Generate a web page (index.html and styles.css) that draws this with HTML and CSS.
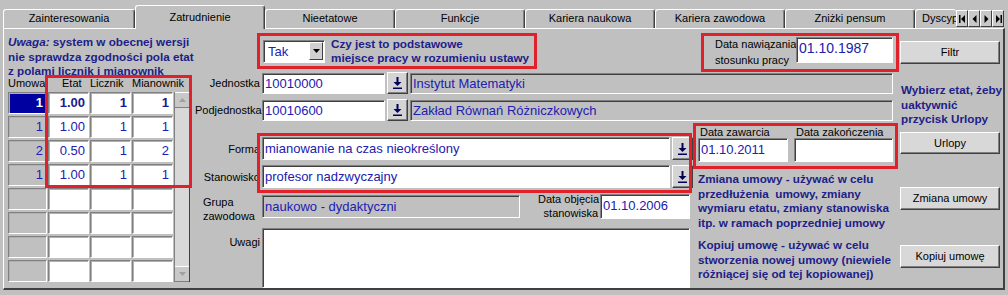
FILE: index.html
```html
<!DOCTYPE html>
<html lang="pl">
<head>
    <meta charset="UTF-8">
    <title>Zatrudnienie</title>
    <link rel="stylesheet" href="styles.css">
</head>
<body>
    <div class="tabs">
        <div class="tab first">Zainteresowania</div>
        <div class="tab active">Zatrudnienie</div>
        <div class="tab">Nieetatowe</div>
        <div class="tab">Funkcje</div>
        <div class="tab">Kariera naukowa</div>
        <div class="tab">Kariera zawodowa</div>
        <div class="tab">Zniżki pensum</div>
        <div class="tab cut">Dyscypliny</div>
        <div class="tab-nav">
            <span class="nav-btn"><svg width="7" height="8" viewBox="0 0 7 8"><rect x="0" y="0" width="1.5" height="8"/><path d="M6 0v8L2 4z"/></svg></span>
            <span class="nav-btn"><svg width="5" height="8" viewBox="0 0 5 8"><path d="M4.5 0v8L0.5 4z"/></svg></span>
            <span class="nav-btn"><svg width="5" height="8" viewBox="0 0 5 8"><path d="M0.5 0v8l4-4z"/></svg></span>
            <span class="nav-btn"><svg width="7" height="8" viewBox="0 0 7 8"><path d="M1 0v8l4-4z"/><rect x="5.5" y="0" width="1.5" height="8"/></svg></span>
        </div>
    </div>

    <div class="panel">
        <!-- lewa kolumna: uwaga + etaty -->
        <div class="left">
            <p class="note"><i>Uwaga:</i> system w obecnej wersji<br>nie sprawdza zgodności pola etat<br>z polami licznik i mianownik</p>
            <div class="etaty">
                <div class="etaty-head">
                    <span class="h-umowa">Umowa</span>
                    <span class="h-etat">Etat</span>
                    <span class="h-licznik">Licznik</span>
                    <span class="h-mian">Mianownik</span>
                </div>
                <div class="etaty-body">
                    <div class="etaty-grid">
                        <div class="cell key sel">1</div><div class="cell b">1.00</div><div class="cell b">1</div><div class="cell b">1</div>
                        <div class="cell key">1</div><div class="cell">1.00</div><div class="cell">1</div><div class="cell">1</div>
                        <div class="cell key">2</div><div class="cell">0.50</div><div class="cell">1</div><div class="cell">2</div>
                        <div class="cell key">1</div><div class="cell">1.00</div><div class="cell">1</div><div class="cell">1</div>
                        <div class="cell key"></div><div class="cell"></div><div class="cell"></div><div class="cell"></div>
                        <div class="cell key"></div><div class="cell"></div><div class="cell"></div><div class="cell"></div>
                        <div class="cell key"></div><div class="cell"></div><div class="cell"></div><div class="cell"></div>
                        <div class="cell key"></div><div class="cell"></div><div class="cell"></div><div class="cell"></div>
                    </div>
                    <div class="scroll">
                        <span class="scroll-btn"><svg width="7" height="4" viewBox="0 0 7 4"><path d="M0 4h7L3.5 0z" fill="#a0a0a0"/></svg></span>
                        <span class="scroll-track"></span>
                        <span class="scroll-btn"><svg width="7" height="4" viewBox="0 0 7 4"><path d="M0 0h7L3.5 4z" fill="#a0a0a0"/></svg></span>
                    </div>
                </div>
                <div class="mark mark-etaty"></div>
            </div>
        </div>

        <div class="main">
            <div class="content">
                <div class="row-top">
                    <div class="box box-podst">
                        <div class="combo">
                            <span class="combo-val">Tak</span>
                            <span class="combo-btn"><svg width="7" height="4" viewBox="0 0 7 4"><path d="M0 0h7L3.5 4z"/></svg></span>
                        </div>
                        <p class="hint">Czy jest to podstawowe<br>miejsce pracy w rozumieniu ustawy</p>
                    </div>
                    <div class="box box-nawiaz">
                        <span class="lbl-nawiaz">Data nawiązania<br>stosunku pracy</span>
                        <span class="input in-nawiaz">01.10.1987</span>
                    </div>
                </div>

                <div class="row row-jedn">
                    <span class="lbl">Jednostka</span>
                    <span class="input in-kod">10010000</span>
                    <span class="drop"><svg width="9" height="12" viewBox="0 0 9 12"><path d="M3.5 0h2v5h3l-4 4-4-4h3z"/><rect y="10.5" width="9" height="1.5"/></svg></span>
                    <span class="field in-nazwa">Instytut Matematyki</span>
                </div>
                <div class="row row-podj">
                    <span class="lbl">Podjednostka</span>
                    <span class="input in-kod">10010600</span>
                    <span class="drop"><svg width="9" height="12" viewBox="0 0 9 12"><path d="M3.5 0h2v5h3l-4 4-4-4h3z"/><rect y="10.5" width="9" height="1.5"/></svg></span>
                    <span class="field in-nazwa">Zakład Równań Różniczkowych</span>
                </div>

                <div class="lower">
                    <div class="form">
                        <div class="fs-group">
                            <div class="row">
                                <span class="lbl">Forma</span>
                                <span class="input in-long">mianowanie na czas nieokreślony</span>
                                <span class="drop"><svg width="9" height="12" viewBox="0 0 9 12"><path d="M3.5 0h2v5h3l-4 4-4-4h3z"/><rect y="10.5" width="9" height="1.5"/></svg></span>
                            </div>
                            <div class="row">
                                <span class="lbl">Stanowisko</span>
                                <span class="input in-long">profesor nadzwyczajny</span>
                                <span class="drop"><svg width="9" height="12" viewBox="0 0 9 12"><path d="M3.5 0h2v5h3l-4 4-4-4h3z"/><rect y="10.5" width="9" height="1.5"/></svg></span>
                            </div>
                            <div class="mark mark-fs"></div>
                        </div>
                        <div class="row row-grupa">
                            <span class="lbl lbl-grupa">Grupa<br>zawodowa</span>
                            <span class="field in-grupa">naukowo - dydaktyczni</span>
                            <span class="lbl-objecia">Data objęcia<br>stanowiska</span>
                            <span class="input in-objecia">01.10.2006</span>
                        </div>
                        <div class="row row-uwagi">
                            <span class="lbl lbl-uwagi">Uwagi</span>
                            <span class="input in-uwagi"></span>
                        </div>
                    </div>

                    <div class="notes">
                        <div class="box box-daty">
                            <div class="date-col">
                                <span class="date-lbl">Data zawarcia</span>
                                <span class="input in-data1">01.10.2011</span>
                            </div>
                            <div class="date-col col2">
                                <span class="date-lbl">Data zakończenia</span>
                                <span class="input in-data2"></span>
                            </div>
                        </div>
                        <p class="hint para1">Zmiana umowy - używać w celu<br>przedłużenia&nbsp; umowy, zmiany<br>wymiaru etatu, zmiany stanowiska<br>itp. w ramach poprzedniej umowy</p>
                        <p class="hint para2">Kopiuj umowę - używać w celu<br>stworzenia nowej umowy (niewiele<br>różniącej się od tej kopiowanej)</p>
                    </div>
                </div>
            </div>

            <div class="buttons">
                <span class="btn btn-filtr">Filtr</span>
                <p class="hint hint-urlopy">Wybierz etat, żeby<br>uaktywnić<br>przycisk Urlopy</p>
                <span class="btn btn-urlopy">Urlopy</span>
                <span class="btn btn-zmiana">Zmiana umowy</span>
                <span class="btn btn-kopiuj">Kopiuj umowę</span>
            </div>
        </div>
    </div>
</body>
</html>
```

FILE: styles.css
```css
* {
    margin: 0;
    padding: 0;
    box-sizing: border-box;
}

body {
    font-family: "Liberation Sans", Arial, sans-serif;
    font-size: 11px;
    color: #000;
    background: #c0c0c0;
    width: 1008px;
    height: 295px;
    overflow: hidden;
}

/* zakładki */
.tabs {
    display: flex;
    align-items: flex-end;
    height: 28px;
    padding-left: 3px;
}

.tab {
    width: 130px;
    height: 19px;
    line-height: 17px;
    text-align: center;
    white-space: nowrap;
    border-top: 1px solid #fff;
    border-left: 1px solid #fff;
    border-right: 1px solid #404040;
    border-radius: 3px 3px 0 0;
    box-shadow: inset -1px 0 #808080;
}

.tab.first {
    width: 132px;
}

.tab.active {
    height: 24px;
    margin-bottom: -1px;
    padding-top: 3px;
    position: relative;
    z-index: 1;
    background: #c0c0c0;
}

.tab.cut {
    width: 41px;
    text-align: left;
    padding-left: 6px;
    overflow: hidden;
    border-right: none;
    box-shadow: none;
}

.tab-nav {
    display: flex;
    margin-bottom: 1px;
}

.nav-btn {
    width: 12px;
    height: 17px;
    display: flex;
    align-items: center;
    justify-content: center;
    background: #c8c8c8;
    border-top: 1px solid #fff;
    border-left: 1px solid #fff;
    border-right: 1px solid #404040;
    border-bottom: 1px solid #404040;
}

.nav-btn svg {
    fill: #000;
}

/* panel */
.panel {
    display: flex;
    width: 1002px;
    height: 262px;
    margin-left: 3px;
    border-top: 1px solid #fff;
    border-left: 1px solid #fff;
    border-right: 2px solid #404040;
    border-bottom: 2px solid #404040;
}

.hint {
    font-size: 11.7px;
    font-weight: bold;
    line-height: 14.5px;
    color: #202088;
    white-space: nowrap;
}

.mark {
    position: absolute;
    border: 3px solid #e0202a;
    z-index: 2;
    pointer-events: none;
}

.box {
    border: 3px solid #e0202a;
}

/* lewa kolumna */
.left {
    width: 184px;
    margin-left: 4px;
    flex-shrink: 0;
}

.note {
    margin-top: 6px;
    width: 195px;
    height: 42px;
    overflow: hidden;
    font-size: 11.7px;
    font-weight: bold;
    line-height: 14.5px;
    color: #202088;
    white-space: nowrap;
}

.etaty {
    position: relative;
}

.etaty-head {
    display: flex;
    height: 15px;
    line-height: 13px;
    white-space: nowrap;
}

.h-umowa {
    width: 40px;
}

.h-etat {
    width: 42px;
    padding-left: 14px;
}

.h-licznik {
    width: 42px;
}

.etaty-body {
    display: flex;
}

.etaty-grid {
    display: grid;
    grid-template-columns: 39px 41px 41px 41px;
    grid-auto-rows: 22px;
    column-gap: 1px;
    row-gap: 2px;
}

.cell {
    background: #fff;
    border: 1px solid;
    border-color: #808080 #fff #fff #808080;
    box-shadow: inset 1px 1px 0 #b0b0b0;
    font-size: 13px;
    line-height: 20px;
    text-align: right;
    padding-right: 3px;
    color: #2020b0;
}

.cell.b {
    font-weight: bold;
    color: #1a1a90;
}

.cell.key {
    background: #c0c0c0;
}

.cell.key.sel {
    background: #0000a0;
    color: #fff;
    font-weight: bold;
}

.scroll {
    width: 16px;
    margin-left: 1px;
    display: flex;
    flex-direction: column;
    background: #d8d8d8;
    border-left: 1px solid #808080;
    border-right: 1px solid #404040;
}

.scroll-btn {
    height: 16px;
    display: flex;
    align-items: center;
    justify-content: center;
    background: #c8c8c8;
    border-top: 1px solid #fff;
    border-bottom: 1px solid #808080;
}

.scroll-track {
    flex: 1;
}

.mark-etaty {
    left: 37px;
    top: -2px;
    width: 147px;
    height: 113px;
}

/* środkowa część */
.main {
    display: flex;
    margin-left: 3px;
}

.content {
    width: 705px;
    display: flex;
    flex-direction: column;
}

.row-top {
    display: flex;
    align-items: flex-start;
    height: 39px;
    margin-top: 4px;
}

.box-podst {
    display: flex;
    align-items: center;
    width: 280px;
    height: 36px;
    margin-left: 62px;
    padding-left: 3px;
}

.combo {
    display: flex;
    align-items: center;
    width: 62px;
    height: 23px;
    background: #fff;
    border: 1px solid;
    border-color: #808080 #fff #fff #808080;
    box-shadow: inset 1px 1px 0 #404040;
}

.combo-val {
    flex: 1;
    padding-left: 4px;
    font-size: 13px;
    color: #2020b0;
}

.combo-btn {
    width: 14px;
    height: 18px;
    margin-right: 1px;
    display: flex;
    align-items: center;
    justify-content: center;
    background: #d0d0d0;
    border-top: 1px solid #fff;
    border-left: 1px solid #fff;
    border-right: 1px solid #404040;
    border-bottom: 1px solid #404040;
}

.box-podst .hint {
    margin-left: 6px;
}

.box-nawiaz {
    display: flex;
    align-items: flex-start;
    width: 198px;
    height: 39px;
    margin-left: 164px;
    padding-left: 11px;
}

.lbl-nawiaz {
    width: 81px;
    line-height: 16px;
    font-size: 11px;
    white-space: nowrap;
}

.input,
.field {
    display: block;
    height: 21px;
    font-size: 13px;
    line-height: 19px;
    padding-left: 2px;
    color: #2020b0;
    white-space: nowrap;
    overflow: hidden;
    border: 1px solid;
    border-color: #808080 #fff #fff #808080;
    box-shadow: inset 1px 1px 0 #404040;
}

.input {
    background: #fff;
}

.field {
    background: #c0c0c0;
}

.in-nawiaz {
    width: 97px;
    height: 26px;
    margin-top: 1px;
    font-size: 14px;
    line-height: 20px;
}

.row {
    display: flex;
    align-items: center;
}

.row-jedn {
    margin-top: 0;
}

.row-podj {
    margin-top: 5px;
}

.lbl {
    width: 65px;
    text-align: right;
    white-space: nowrap;
    margin-right: 2px;
}

.drop {
    width: 21px;
    height: 22px;
    margin-left: 2px;
    display: flex;
    align-items: center;
    justify-content: center;
    background: #d4d4d4;
    border-top: 1px solid #fff;
    border-left: 1px solid #fff;
    border-right: 1px solid #404040;
    border-bottom: 1px solid #404040;
    box-shadow: inset -1px -1px 0 #808080;
}

.drop svg {
    fill: #00005a;
}

.in-kod {
    width: 123px;
}

.in-nazwa {
    width: 483px;
    margin-left: 2px;
}

.lower {
    display: flex;
}

.form {
    width: 498px;
}

.fs-group {
    position: relative;
    margin-top: 16px;
    display: flex;
    flex-direction: column;
    gap: 5px;
}

.in-long {
    width: 408px;
    height: 23px;
    line-height: 21px;
}

.fs-group .drop {
    height: 23px;
}

.mark-fs {
    left: 62px;
    top: -4px;
    right: 1px;
    bottom: -5px;
}

.row-grupa {
    align-items: flex-start;
    margin-top: 6px;
}

.lbl-grupa {
    text-align: left;
    padding-left: 8px;
    margin-top: 1px;
    line-height: 14px;
}

.in-grupa {
    width: 258px;
    height: 23px;
    line-height: 21px;
    margin-top: 1px;
}

.lbl-objecia {
    width: 60px;
    margin-left: 18px;
    margin-top: -2px;
    text-align: right;
    line-height: 14px;
    white-space: nowrap;
}

.in-objecia {
    width: 90px;
    height: 25px;
    line-height: 22px;
    margin-left: 2px;
}

.row-uwagi {
    align-items: flex-start;
    margin-top: 5px;
}

.lbl-uwagi {
    padding-top: 8px;
}

.in-uwagi {
    width: 428px;
    height: 60px;
}

/* notatki po prawej */
.notes {
    width: 206px;
}

.box-daty {
    display: flex;
    width: 205px;
    height: 46px;
    margin-top: 2px;
}

.date-col {
    display: flex;
    flex-direction: column;
    padding-left: 2px;
}

.date-col.col2 {
    padding-left: 0;
    margin-left: 6px;
}

.date-lbl {
    height: 12px;
    line-height: 12px;
    padding-left: 2px;
    white-space: nowrap;
    font-size: 11px;
}

.date-col .input {
    height: 24px;
    line-height: 21px;
}

.in-data1 {
    width: 90px;
}

.in-data2 {
    width: 99px;
}

.para1 {
    margin-top: 3px;
    padding-left: 5px;
}

.para2 {
    margin-top: 8px;
    padding-left: 5px;
}

/* przyciski */
.buttons {
    width: 100px;
    display: flex;
    flex-direction: column;
}

.btn {
    display: block;
    height: 23px;
    line-height: 20px;
    text-align: center;
    background: #d8d8d8;
    border-top: 1px solid #fff;
    border-left: 1px solid #fff;
    border-right: 1px solid #404040;
    border-bottom: 1px solid #404040;
    box-shadow: inset -1px -1px 0 #808080;
}

.btn-filtr {
    margin-top: 12px;
}

.hint-urlopy {
    margin-top: 19px;
    padding-left: 1px;
}

.btn-urlopy {
    margin-top: 5.5px;
    height: 22px;
}

.btn-zmiana {
    margin-top: 33px;
}

.btn-kopiuj {
    margin-top: 35px;
}
```
